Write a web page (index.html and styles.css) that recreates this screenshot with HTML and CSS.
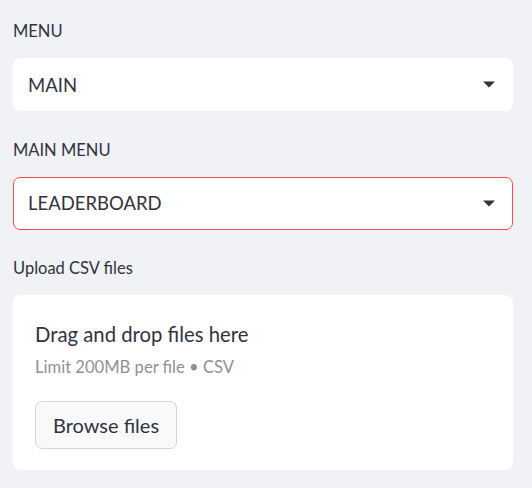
FILE: index.html
```html
<!DOCTYPE html>
<html lang="en">
<head>
<meta charset="utf-8">
<title>Sidebar</title>
<link rel="stylesheet" href="styles.css">
</head>
<body>
<div class="sidebar">
  <div class="field">
    <div class="label">MENU</div>
    <div class="select">
      <span class="value">MAIN</span>
      <svg class="caret" width="12" height="7" viewBox="0 0 12 7"><path d="M0 0.5h12L6 6.5z" fill="#31333f"/></svg>
    </div>
  </div>
  <div class="field">
    <div class="label">MAIN MENU</div>
    <div class="select focused">
      <span class="value">LEADERBOARD</span>
      <svg class="caret" width="12" height="7" viewBox="0 0 12 7"><path d="M0 0.5h12L6 6.5z" fill="#31333f"/></svg>
    </div>
  </div>
  <div class="field">
    <div class="label">Upload CSV files</div>
    <div class="dropzone">
      <div class="drop-title">Drag and drop files here</div>
      <div class="drop-limit">Limit 200MB per file • CSV</div>
      <button class="browse">Browse files</button>
    </div>
  </div>
</div>
</body>
</html>
```

FILE: styles.css
```css
html, body {
  margin: 0;
  padding: 0;
  background: #f0f2f6;
}
body {
  font-family: Lato, "Open Sans", sans-serif;
  color: #31333f;
}
.sidebar {
  padding: 21px 19px 0 13px;
  display: flex;
  flex-direction: column;
  gap: 28.5px;
}
.field {
  display: flex;
  flex-direction: column;
}
.label {
  font-size: 16.5px;
  line-height: 20px;
  height: 20px;
  margin-bottom: 17px;
  color: #31333f;
}
.select {
  box-sizing: border-box;
  height: 53px;
  background: #ffffff;
  border: 1px solid #ffffff;
  border-radius: 7px;
  display: flex;
  align-items: center;
  justify-content: space-between;
  padding: 0 17px 0 14px;
}
.select.focused {
  border-color: #ff4b4b;
}
.value {
  font-size: 18.5px;
  line-height: 24px;
}
.caret {
  display: block;
}
.dropzone {
  box-sizing: border-box;
  height: 175px;
  background: #ffffff;
  border-radius: 8px;
  padding: 27px 22px 0 22px;
  display: flex;
  flex-direction: column;
  align-items: flex-start;
}
.drop-title {
  font-size: 20.3px;
  line-height: 24px;
}
.drop-limit {
  font-size: 16.6px;
  line-height: 20px;
  margin-top: 11px;
  color: #8f9197;
}
.browse {
  margin-top: 24px;
  box-sizing: border-box;
  width: 142px;
  height: 48px;
  background: #f9f9fb;
  border: 1px solid #d6d6d9;
  border-radius: 7px;
  font-family: inherit;
  font-size: 20px;
  color: #31333f;
  padding: 0;
}
```
